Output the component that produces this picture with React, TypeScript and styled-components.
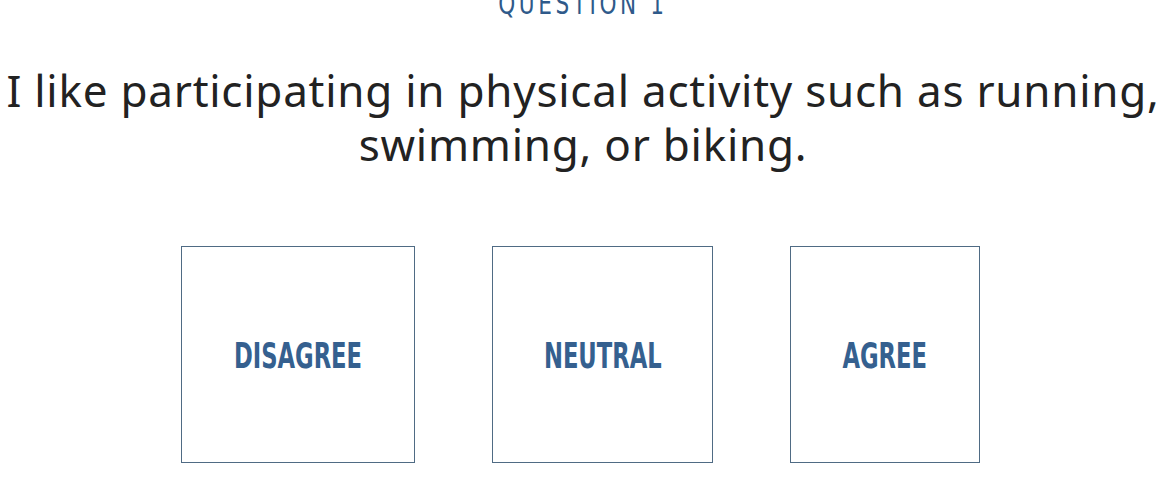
import React from "react";
import styled, { createGlobalStyle } from "styled-components";

const Global = createGlobalStyle`
  html, body { margin: 0; padding: 0; background: #ffffff; }
  body { overflow: hidden; }
`;

const Page = styled.main`
  width: 1166px;
  height: 502px;
  display: flex;
  flex-direction: column;
  align-items: center;
  text-align: center;
  overflow: hidden;
`;

const Eyebrow = styled.div`
  margin-top: -9px;
  height: 26px;
  font-family: "Liberation Sans Narrow", "DejaVu Sans Condensed", "Roboto", sans-serif;
  font-weight: 400;
  font-size: 30px;
  line-height: 26px;
  letter-spacing: 4.5px;
  color: #2f5a8a;
  transform: scaleX(0.8);
  white-space: nowrap;
`;

const Question = styled.h1`
  margin: 46px 0 0;
  font-family: "Noto Sans", "Open Sans", sans-serif;
  font-weight: 400;
  font-size: 44px;
  line-height: 54px;
  color: #222222;
  letter-spacing: 0.75px;
  white-space: nowrap;
`;

const Options = styled.div`
  display: flex;
  justify-content: center;
  gap: 77px;
  margin-top: 75px;
  margin-right: 5px;
`;

const Option = styled.button<{ $w: number }>`
  box-sizing: border-box;
  width: ${(p) => p.$w}px;
  height: 217px;
  border: 1px solid #4f6b84;
  background: #ffffff;
  display: flex;
  align-items: center;
  justify-content: center;
  padding: 0;
  cursor: pointer;
`;

const Label = styled.span`
  display: inline-block;
  font-family: "DejaVu Sans Condensed", "Liberation Sans Narrow", sans-serif;
  font-weight: 700;
  font-size: 35px;
  line-height: 35px;
  color: #35608f;
  transform: scaleX(0.72);
  margin-top: 4px;
  white-space: nowrap;
`;

const options = [
  { label: "DISAGREE", w: 234 },
  { label: "NEUTRAL", w: 221 },
  { label: "AGREE", w: 190 },
];

export default function App() {
  return (
    <Page>
      <Global />
      <Eyebrow>QUESTION 1</Eyebrow>
      <Question>
        I like participating in physical activity such as running,
        <br />
        swimming, or biking.
      </Question>
      <Options>
        {options.map((o) => (
          <Option key={o.label} $w={o.w}>
            <Label>{o.label}</Label>
          </Option>
        ))}
      </Options>
    </Page>
  );
}
